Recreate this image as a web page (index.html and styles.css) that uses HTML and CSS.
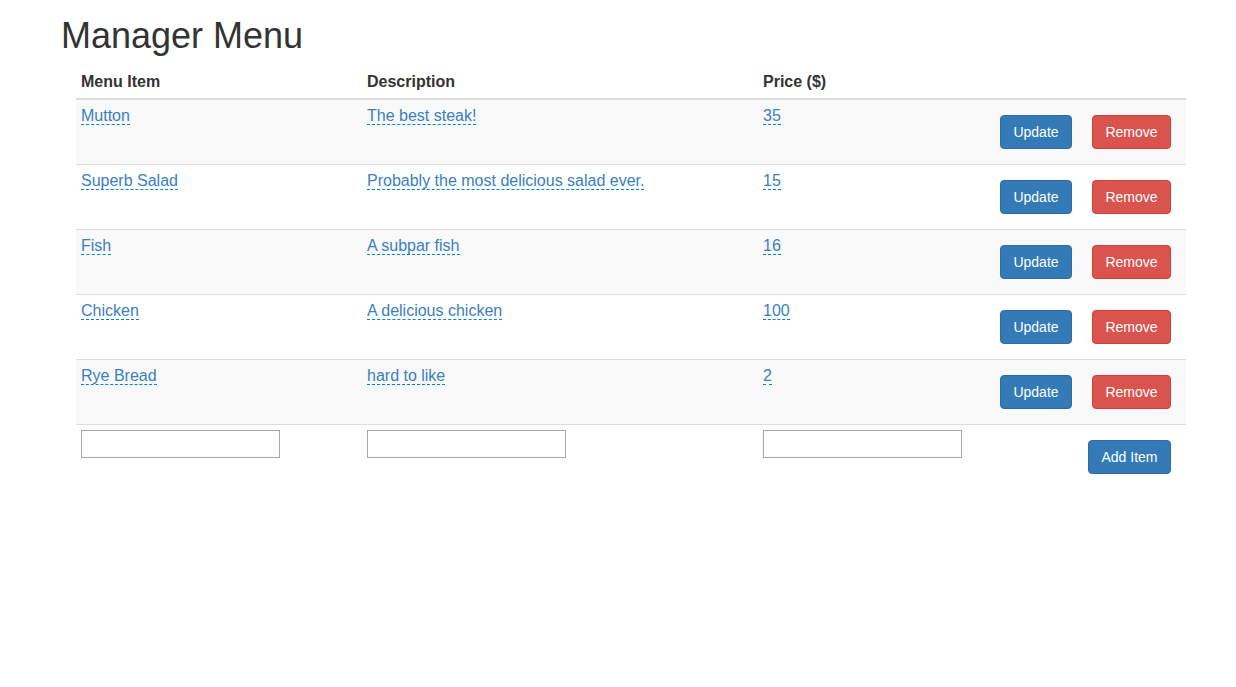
FILE: index.html
```html
<!DOCTYPE html>
<html>
<head>
<meta charset="utf-8">
<title>Manager Menu</title>
<link rel="stylesheet" href="styles.css">
</head>
<body>
<div class="page">
  <h1 class="title">Manager Menu</h1>
  <table class="menu-table">
    <thead>
      <tr>
        <th class="col-item">Menu Item</th>
        <th class="col-desc">Description</th>
        <th class="col-price">Price ($)</th>
        <th class="col-actions"></th>
      </tr>
    </thead>
    <tbody>
      <tr class="striped">
        <td><a class="editable">Mutton</a></td>
        <td><a class="editable">The best steak!</a></td>
        <td><a class="editable">35</a></td>
        <td><div class="actions"><button class="btn btn-primary btn-update">Update</button><button class="btn btn-danger btn-remove">Remove</button></div></td>
      </tr>
      <tr>
        <td><a class="editable">Superb Salad</a></td>
        <td><a class="editable">Probably the most delicious salad ever.</a></td>
        <td><a class="editable">15</a></td>
        <td><div class="actions"><button class="btn btn-primary btn-update">Update</button><button class="btn btn-danger btn-remove">Remove</button></div></td>
      </tr>
      <tr class="striped">
        <td><a class="editable">Fish</a></td>
        <td><a class="editable">A subpar fish</a></td>
        <td><a class="editable">16</a></td>
        <td><div class="actions"><button class="btn btn-primary btn-update">Update</button><button class="btn btn-danger btn-remove">Remove</button></div></td>
      </tr>
      <tr>
        <td><a class="editable">Chicken</a></td>
        <td><a class="editable">A delicious chicken</a></td>
        <td><a class="editable">100</a></td>
        <td><div class="actions"><button class="btn btn-primary btn-update">Update</button><button class="btn btn-danger btn-remove">Remove</button></div></td>
      </tr>
      <tr class="striped">
        <td><a class="editable">Rye Bread</a></td>
        <td><a class="editable">hard to like</a></td>
        <td><a class="editable">2</a></td>
        <td><div class="actions"><button class="btn btn-primary btn-update">Update</button><button class="btn btn-danger btn-remove">Remove</button></div></td>
      </tr>
      <tr class="new-row">
        <td><input class="field" type="text"></td>
        <td><input class="field" type="text"></td>
        <td><input class="field" type="text"></td>
        <td><div class="actions"><button class="btn btn-primary btn-add">Add Item</button></div></td>
      </tr>
    </tbody>
  </table>
</div>
</body>
</html>
```

FILE: styles.css
```css
* {
  box-sizing: border-box;
}

html, body {
  margin: 0;
  padding: 0;
  background: #fff;
}

body {
  font-family: "Liberation Sans", Arial, Helvetica, sans-serif;
  font-size: 16px;
  line-height: 1.42857;
  color: #333;
}

.page {
  padding: 16px 50px 0 61px;
}

.title {
  margin: 0 0 10px 0;
  font-size: 36px;
  font-weight: 500;
  line-height: 1.1;
  color: #333;
}

.menu-table {
  margin-left: 15px;
  width: 1110px;
  border-collapse: collapse;
  border-spacing: 0;
}

.menu-table th,
.menu-table td {
  padding: 5px;
  text-align: left;
  vertical-align: top;
  border-top: 1px solid #ddd;
}

.menu-table th {
  font-weight: bold;
  border-top: 0;
  border-bottom: 2px solid #ddd;
  vertical-align: bottom;
}

.col-item { width: 286px; }
.col-desc { width: 396px; }
.col-price { width: 227px; }
.col-actions { width: 201px; }

.striped td {
  background: #f9f9f9;
}

.editable {
  color: #3a80c0;
  text-decoration: none;
  border-bottom: 1px dashed #0088cc;
  cursor: pointer;
}

.actions {
  display: flex;
  justify-content: flex-end;
}

.btn {
  display: inline-block;
  margin: 10px;
  padding: 6px 0;
  font-family: inherit;
  font-size: 14px;
  line-height: 20px;
  text-align: center;
  color: #fff;
  border: 1px solid transparent;
  border-radius: 4px;
  cursor: pointer;
}

.btn-update { width: 72px; }
.btn-remove { width: 79px; }
.btn-add { width: 83px; }

.btn-primary {
  background: #337ab7;
  border-color: #2e6da4;
}

.btn-danger {
  background: #d9534f;
  border-color: #d43f3a;
}

.field {
  display: block;
  width: 199px;
  height: 28px;
  margin: 0;
  padding: 1px 2px;
  font-family: inherit;
  font-size: 16px;
  border: 1px solid #a9a9a9;
  background: #fff;
}
```
